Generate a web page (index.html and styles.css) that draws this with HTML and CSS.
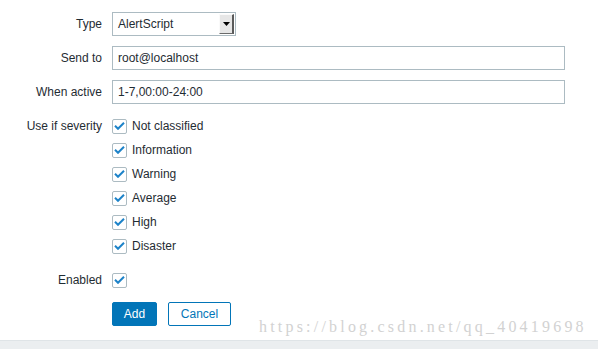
FILE: index.html
```html
<!DOCTYPE html>
<html lang="en">
<head>
    <meta charset="UTF-8">
    <title>Media</title>
    <link rel="stylesheet" href="styles.css">
</head>
<body>
    <form class="media-form">
        <label class="label" for="type">Type</label>
        <div class="field">
            <span class="select">
                <span class="select-value" id="type">AlertScript</span>
                <span class="select-arrow">
                    <svg width="7" height="4" viewBox="0 0 7 4"><path d="M0 0h7L3.5 4z" fill="#000"/></svg>
                </span>
            </span>
        </div>

        <label class="label" for="sendto">Send to</label>
        <div class="field"><input class="text" id="sendto" type="text" value="root@localhost"></div>

        <label class="label" for="period">When active</label>
        <div class="field"><input class="text" id="period" type="text" value="1-7,00:00-24:00"></div>

        <div class="label label-top">Use if severity</div>
        <ul class="checks">
            <li><span class="box"><svg width="11" height="8" viewBox="0 0 11 8"><path d="M1 3.8l3 3 6-6" fill="none" stroke="#1d83c9" stroke-width="2"/></svg></span>Not classified</li>
            <li><span class="box"><svg width="11" height="8" viewBox="0 0 11 8"><path d="M1 3.8l3 3 6-6" fill="none" stroke="#1d83c9" stroke-width="2"/></svg></span>Information</li>
            <li><span class="box"><svg width="11" height="8" viewBox="0 0 11 8"><path d="M1 3.8l3 3 6-6" fill="none" stroke="#1d83c9" stroke-width="2"/></svg></span>Warning</li>
            <li><span class="box"><svg width="11" height="8" viewBox="0 0 11 8"><path d="M1 3.8l3 3 6-6" fill="none" stroke="#1d83c9" stroke-width="2"/></svg></span>Average</li>
            <li><span class="box"><svg width="11" height="8" viewBox="0 0 11 8"><path d="M1 3.8l3 3 6-6" fill="none" stroke="#1d83c9" stroke-width="2"/></svg></span>High</li>
            <li><span class="box"><svg width="11" height="8" viewBox="0 0 11 8"><path d="M1 3.8l3 3 6-6" fill="none" stroke="#1d83c9" stroke-width="2"/></svg></span>Disaster</li>
        </ul>

        <div class="label">Enabled</div>
        <div class="field"><span class="box"><svg width="11" height="8" viewBox="0 0 11 8"><path d="M1 3.8l3 3 6-6" fill="none" stroke="#1d83c9" stroke-width="2"/></svg></span></div>

        <div></div>
        <div class="buttons">
            <button type="button" class="btn btn-primary">Add</button>
            <button type="button" class="btn btn-alt">Cancel</button>
        </div>
    </form>
    <div class="footer"></div>
    <div class="watermark">https://blog.csdn.net/qq_40419698</div>
</body>
</html>
```

FILE: styles.css
```css
body {
    margin: 0;
    background-color: #fff;
    font-family: "Liberation Sans", Arial, sans-serif;
    font-size: 12px;
    color: #1f2c33;
    height: 349px;
    overflow: hidden;
    position: relative;
}
.media-form {
    display: grid;
    grid-template-columns: 102px 453px;
    column-gap: 10px;
    row-gap: 10px;
    padding-top: 12px;
}
.label {
    text-align: right;
    height: 24px;
    line-height: 24px;
}
.field {
    height: 24px;
    display: flex;
    align-items: center;
}
.select {
    display: flex;
    width: 124px;
    height: 24px;
    box-sizing: border-box;
    border: 1px solid #acbbc2;
    background: #fff;
}
.select-value {
    flex: 1;
    padding-left: 5px;
    line-height: 22px;
}
.select-arrow {
    width: 12px;
    margin: 1px 1px 1px 0;
    display: flex;
    align-items: center;
    justify-content: center;
    background: #e6e6e6;
    border-right: 2px solid #5a5a5a;
    border-bottom: 1px solid #6a6a6a;
    border-top: 1px solid #fafafa;
    border-left: 1px solid #fafafa;
}
.text {
    width: 453px;
    height: 24px;
    box-sizing: border-box;
    border: 1px solid #acbbc2;
    padding: 0 5px;
    font-family: inherit;
    font-size: 12px;
    color: #1f2c33;
    margin: 0;
    outline: none;
}
.checks {
    list-style: none;
    margin: 0;
    padding: 0;
}
.checks li {
    height: 24px;
    display: flex;
    align-items: center;
}
.box {
    width: 15px;
    height: 15px;
    box-sizing: border-box;
    border: 1px solid #acbbc2;
    border-radius: 2px;
    display: inline-flex;
    align-items: center;
    justify-content: center;
    margin-right: 5px;
    background: #fff;
}
.buttons {
    display: flex;
    gap: 11px;
}
.btn {
    height: 24px;
    box-sizing: border-box;
    border-radius: 2px;
    font-family: inherit;
    font-size: 12px;
    padding: 0;
    margin: 0;
}
.btn-primary {
    width: 45px;
    background: #0275b8;
    border: 1px solid #0275b8;
    color: #fff;
}
.btn-alt {
    width: 63px;
    background: #fff;
    border: 1px solid #0275b8;
    color: #0275b8;
}
.footer {
    margin-top: 14px;
    height: 9px;
    background: #ebeef0;
    border-top: 1px solid #dfe4e7;
}
.watermark {
    position: absolute;
    left: 259px;
    top: 318px;
    font-family: "Liberation Serif", serif;
    font-size: 16px;
    color: #d2d2d2;
    letter-spacing: 3.2px;
}
```
